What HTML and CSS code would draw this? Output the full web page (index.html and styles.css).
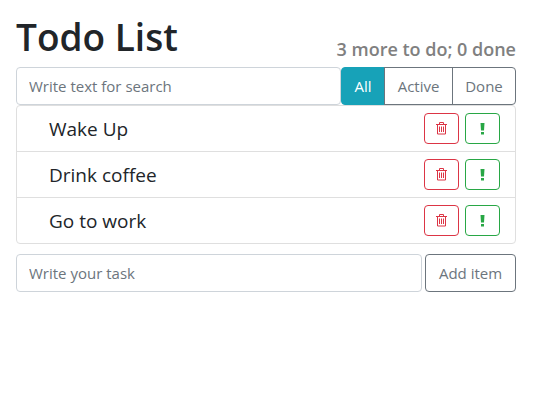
FILE: index.html
```html
<!DOCTYPE html>
<html lang="en">
<head>
<meta charset="utf-8">
<title>Todo List</title>
<link rel="stylesheet" href="styles.css">
</head>
<body>
<svg class="sprite" aria-hidden="true">
  <symbol id="trash" viewBox="0 0 11 13">
    <path d="M0 2.5h11M3.5 2.5v-2h4v2M1.500 2.500v9.500h8v-9.500M3.500 4.500v5.500M5.500 4.500v5.500M7.500 4.500v5.500" fill="none" stroke="currentColor"/>
  </symbol>
  <symbol id="mark" viewBox="0 0 5 12">
    <path d="M0.500 0h4l-0.500 7.500h-3zM1 9h3v2.500h-3z" fill="currentColor"/>
  </symbol>
</svg>
<main class="todo-app">
  <header class="app-header">
    <h1 class="title">Todo List</h1>
    <h2 class="summary">3 more to do; 0 done</h2>
  </header>
  <div class="top-panel">
    <input class="field" type="text" placeholder="Write text for search" aria-label="Search">
    <div class="filters">
      <button type="button" class="btn filter filter-all active">All</button>
      <button type="button" class="btn filter filter-active">Active</button>
      <button type="button" class="btn filter filter-done">Done</button>
    </div>
  </div>
  <ul class="todo-list">
    <li class="item">
      <span class="label">Wake Up</span>
      <button type="button" class="btn icon-btn danger" aria-label="Delete"><svg class="trash"><use href="#trash"/></svg></button>
      <button type="button" class="btn icon-btn success" aria-label="Important"><svg class="mark"><use href="#mark"/></svg></button>
    </li>
    <li class="item">
      <span class="label">Drink coffee</span>
      <button type="button" class="btn icon-btn danger" aria-label="Delete"><svg class="trash"><use href="#trash"/></svg></button>
      <button type="button" class="btn icon-btn success" aria-label="Important"><svg class="mark"><use href="#mark"/></svg></button>
    </li>
    <li class="item">
      <span class="label">Go to work</span>
      <button type="button" class="btn icon-btn danger" aria-label="Delete"><svg class="trash"><use href="#trash"/></svg></button>
      <button type="button" class="btn icon-btn success" aria-label="Important"><svg class="mark"><use href="#mark"/></svg></button>
    </li>
  </ul>
  <form class="add-form">
    <input class="field" type="text" placeholder="Write your task" aria-label="New task">
    <button type="button" class="btn add">Add item</button>
  </form>
</main>
</body>
</html>
```

FILE: styles.css
```css
* {
  box-sizing: border-box;
}

body {
  margin: 0;
  background: #fff;
  color: #212529;
  font-family: "Open Sans", "Noto Sans", sans-serif;
  font-size: 15px;
  line-height: 24px;
}

.sprite {
  position: absolute;
  width: 0;
  height: 0;
}

.todo-app {
  padding: 13px 21px 16px 16px;
}

.app-header {
  display: flex;
  align-items: flex-end;
  justify-content: space-between;
  margin-bottom: 6px;
}

.title {
  margin: 0;
  font-size: 37px;
  font-weight: 600;
  line-height: 48px;
}

.summary {
  margin: 0;
  color: #808080;
  font-size: 18px;
  font-weight: 600;
  line-height: 24px;
}

.top-panel,
.filters,
.add-form {
  display: flex;
}

.field {
  flex: 1;
  min-width: 0;
  height: 38px;
  padding: 0 12px;
  border: 1px solid #ced4da;
  border-radius: 4px;
  background: #fff;
  color: #495057;
  font: inherit;
}

.field::placeholder {
  color: #6c757d;
  opacity: 1;
}

.btn {
  height: 38px;
  padding: 0;
  border: 1px solid #6c757d;
  border-radius: 4px;
  background: transparent;
  color: #6c757d;
  font: inherit;
}

.filter + .filter {
  margin-left: -1px;
}

.filter-all {
  width: 44px;
  border-radius: 4px 0 0 4px;
}

.filter-active {
  width: 69px;
  border-radius: 0;
}

.filter-done {
  width: 64px;
  border-radius: 0 4px 4px 0;
}

.filter.active {
  border-color: #17a2b8;
  background: #17a2b8;
  color: #fff;
}

.todo-list {
  margin: 0 0 10px;
  padding: 0;
  border: 1px solid #dfdfdf;
  border-radius: 4px;
  list-style: none;
}

.item {
  display: flex;
  align-items: center;
  gap: 6px;
  padding: 7px 15px 7px 32px;
}

.item + .item {
  border-top: 1px solid #dfdfdf;
}

.label {
  flex: 1;
  font-size: 19px;
}

.icon-btn {
  display: flex;
  align-items: center;
  justify-content: center;
  width: 35px;
  height: 31px;
}

.danger {
  border-color: #dc3545;
  color: #dc3545;
}

.success {
  border-color: #28a745;
  color: #28a745;
}

.trash {
  width: 11px;
  height: 13px;
}

.mark {
  width: 5px;
  height: 12px;
}

.add-form {
  gap: 3px;
}

.add {
  width: 91px;
}
```
